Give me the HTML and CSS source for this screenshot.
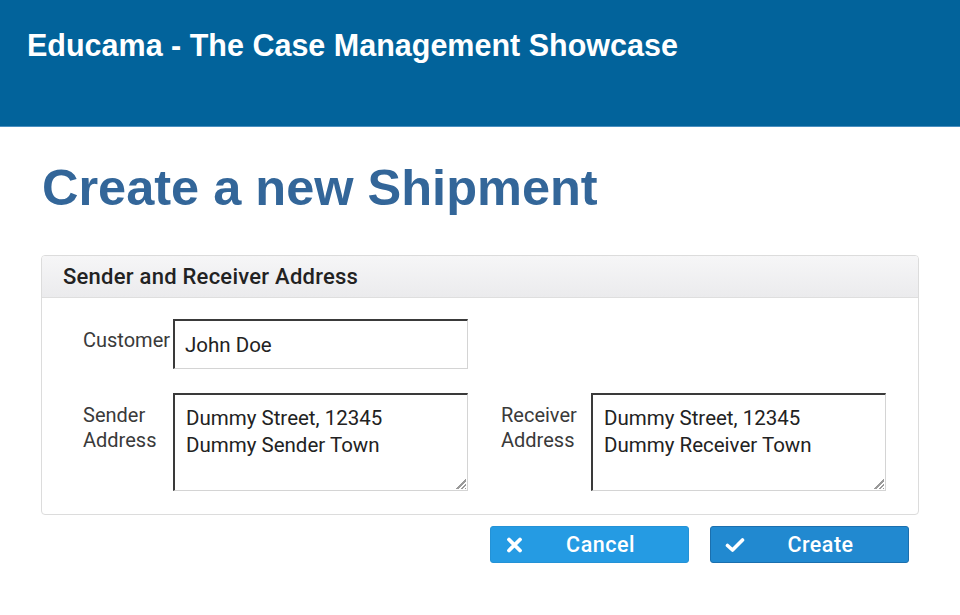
FILE: index.html
```html
<!DOCTYPE html>
<html>
<head>
<meta charset="utf-8">
<link rel="stylesheet" href="styles.css">
</head>
<body>
<header class="topbar">
  <div class="brand">Educama - The Case Management Showcase</div>
</header>
<main class="content">
  <h1 class="page-title">Create a new Shipment</h1>
  <section class="panel">
    <div class="panel-heading">Sender and Receiver Address</div>
    <div class="panel-body">
      <div class="row">
        <div class="field">
          <label class="label">Customer</label>
          <input class="input" type="text" value="John Doe">
        </div>
      </div>
      <div class="row row-areas">
        <div class="field">
          <label class="label">Sender Address</label>
          <textarea class="input area">Dummy Street, 12345
Dummy Sender Town</textarea>
        </div>
        <div class="field">
          <label class="label">Receiver Address</label>
          <textarea class="input area">Dummy Street, 12345
Dummy Receiver Town</textarea>
        </div>
      </div>
    </div>
  </section>
  <div class="actions">
    <button class="btn btn-cancel"><svg class="ico" viewBox="0 0 20 16" width="20" height="16"><path d="M4 2.5 L15 13.5 M15 2.5 L4 13.5" stroke="#fff" stroke-width="3.8" stroke-linecap="round"/></svg><span>Cancel</span></button>
    <button class="btn btn-create"><svg class="ico" viewBox="0 0 20 16" width="20" height="16"><path d="M2.5 8.5 L7.5 13 L17.5 3" stroke="#fff" stroke-width="3.6" fill="none" stroke-linecap="round" stroke-linejoin="round"/></svg><span>Create</span></button>
  </div>
</main>
</body>
</html>
```

FILE: styles.css
```css
html, body {
  margin: 0;
  padding: 0;
  background: #fff;
}
body {
  font-family: Roboto, "Liberation Sans", sans-serif;
  color: #333;
}
.topbar {
  height: 127px;
  background: #02639b;
  border-bottom: 1px solid #4a8fc0;
  box-sizing: border-box;
  padding: 28px 0 0 27px;
}
.brand {
  font-family: "Liberation Sans", Arial, sans-serif;
  font-weight: bold;
  font-size: 30.5px;
  color: #fff;
  line-height: 34px;
}
.content {
  padding: 0 41px;
}
.page-title {
  margin: 0;
  padding: 31px 0 0 1px;
  font-family: "Liberation Sans", Arial, sans-serif;
  font-weight: bold;
  font-size: 50.5px;
  line-height: 60px;
  color: #336699;
  box-sizing: border-box;
  height: 128px;
}
.panel {
  border: 1px solid #dcdcdc;
  border-radius: 4px;
  width: 878px;
  box-sizing: border-box;
}
.panel-heading {
  height: 42px;
  box-sizing: border-box;
  background: linear-gradient(#f6f6f7, #ebebed);
  border-bottom: 1px solid #dedede;
  border-radius: 3px 3px 0 0;
  padding: 0 0 0 21px;
  font-size: 22px;
  font-weight: 500;
  letter-spacing: 0.25px;
  line-height: 42px;
  color: #222;
}
.panel-body {
  padding: 21px 0 23px 41px;
}
.row {
  display: flex;
  gap: 33px;
}
.row + .row {
  margin-top: 24px;
}
.field {
  display: flex;
  align-items: flex-start;
}
.label {
  width: 90px;
  font-size: 20px;
  line-height: 25px;
  color: #3a3a3a;
  padding-top: 9px;
}
.row-areas .label {
  padding-top: 10px;
}
.input {
  width: 295px;
  height: 50px;
  box-sizing: border-box;
  border-top: 2px solid #3a3a3a;
  border-left: 2px solid #3a3a3a;
  border-right: 1px solid #d4d4d4;
  border-bottom: 1px solid #d4d4d4;
  padding: 0 10px;
  font-family: Roboto, "Liberation Sans", sans-serif;
  font-size: 20.5px;
  color: #222;
  background-color: #fff;
  margin: 0;
  outline: none;
}
.area {
  height: 98px;
  resize: none;
  line-height: 27px;
  padding: 10px 11px 8px;
  overflow: hidden;
  background-image:
    linear-gradient(135deg, #fff 52%, transparent 52%),
    repeating-linear-gradient(135deg, #fff 0, #fff 1.6px, #9a9a9a 1.6px, #9a9a9a 3.2px);
  background-size: 13px 13px, 13px 13px;
  background-position: right 1px bottom 1px, right 1px bottom 1px;
  background-repeat: no-repeat;
}
.actions {
  display: flex;
  justify-content: flex-end;
  gap: 21px;
  padding: 11px 10px 0 0;
  width: 878px;
  box-sizing: border-box;
}
.btn {
  width: 199px;
  height: 37px;
  border-radius: 3px;
  border: 1px solid transparent;
  display: flex;
  align-items: center;
  padding: 0 0 0 14px;
  box-sizing: border-box;
  color: #fff;
  font-family: Roboto, "Liberation Sans", sans-serif;
  font-size: 21.5px;
  font-weight: 500;
  letter-spacing: 0.5px;
  cursor: pointer;
}
.btn span {
  flex: 1;
  text-align: center;
  padding-right: 12px;
}
.btn-cancel {
  background: #259be3;
  border-color: #2492d6;
}
.btn-create {
  background: #2189d0;
  border-color: #1b6fae;
}
.ico {
  display: block;
}
```
